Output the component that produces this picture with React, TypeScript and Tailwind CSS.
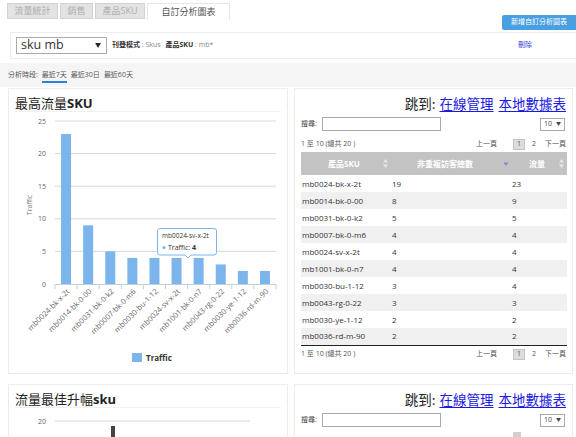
import React from 'react';

const rows: [string, string, string][] = [
  ['mb0024-bk-x-2t', '19', '23'],
  ['mb0014-bk-0-00', '8', '9'],
  ['mb0031-bk-0-k2', '5', '5'],
  ['mb0007-bk-0-m6', '4', '4'],
  ['mb0024-sv-x-2t', '4', '4'],
  ['mb1001-bk-0-n7', '4', '4'],
  ['mb0030-bu-1-12', '3', '4'],
  ['mb0043-rg-0-22', '3', '3'],
  ['mb0030-ye-1-12', '2', '2'],
  ['mb0036-rd-m-90', '2', '2'],
];

const bars = [23, 9, 5, 4, 4, 4, 4, 3, 2, 2];
const labels = [
  'mb0024-bk-x-2t',
  'mb0014-bk-0-00',
  'mb0031-bk-0-k2',
  'mb0007-bk-0-m6',
  'mb0030-bu-1-12',
  'mb0024-sv-x-2t',
  'mb1001-bk-0-n7',
  'mb0043-rg-0-22',
  'mb0030-ye-1-12',
  'mb0036-rd-m-90',
];

const OX = 9;
const OY = 112;

function Chart() {
  const y0 = 284 - OY;
  const unit = 6.52;
  const gx0 = 55 - OX;
  const gx1 = 276 - OX;
  const cw = (gx1 - gx0) / 10;
  const ticks = [0, 5, 10, 15, 20, 25];
  return (
    <svg width="278" height="258" className="block" style={{ fontFamily: "'Open Sans','DejaVu Sans',sans-serif" }}>
      {ticks.map((t) => {
        const y = y0 - t * unit;
        return (
          <g key={t}>
            {t > 0 && <line x1={gx0} x2={gx1} y1={y} y2={y} stroke="#d8d8d8" strokeWidth="1" />}
            <text x={37} y={y + 2.5} fontSize="7" fill="#666" textAnchor="end">
              {t}
            </text>
          </g>
        );
      })}
      <text x={23} y={205 - OY} fontSize="7" fill="#777" textAnchor="middle" transform={`rotate(-90 23 ${205 - OY})`}>
        Traffic
      </text>
      {bars.map((v, i) => {
        const cx = gx0 + cw * (i + 0.5);
        const h = v * unit;
        return <rect key={i} x={cx - 5} y={y0 - h} width="10" height={h} fill="#7cb5ec" />;
      })}
      <line x1={gx0} x2={gx1} y1={y0 + 0.5} y2={y0 + 0.5} stroke="#c0d0e0" strokeWidth="1" />
      {Array.from({ length: 11 }).map((_, k) => {
        const x = gx0 + cw * k;
        return <line key={k} x1={x} x2={x} y1={y0} y2={y0 + 5} stroke="#c0d0e0" strokeWidth="1" />;
      })}
      {labels.map((l, i) => {
        const cx = gx0 + cw * (i + 0.5) + 4;
        const y = y0 + 8;
        return (
          <text key={l} x={cx} y={y} fontSize="7.5" fill="#666" textAnchor="end" transform={`rotate(-45 ${cx} ${y})`}>
            {l}
          </text>
        );
      })}
      <rect x={132 - OX} y={353 - OY} width="10" height="9" fill="#7cb5ec" />
      <text x={146 - OX} y={361 - OY} fontSize="8" fontWeight="bold" fill="#333">
        Traffic
      </text>
      <g transform={`translate(${157 - OX} ${228 - OY})`}>
        <path
          d="M3 0.5 H57 Q59.5 0.5 59.5 3 V24.5 Q59.5 27 57 27 H34 L31 30 L28 27 H3 Q0.5 27 0.5 24.5 V3 Q0.5 0.5 3 0.5 Z"
          fill="rgba(255,255,255,0.9)"
          stroke="#7cb5ec"
          strokeWidth="1"
        />
        <text x="5" y="10" fontSize="6.5" fill="#333">
          mb0024-sv-x-2t
        </text>
        <circle cx="7" cy="19.5" r="1.6" fill="#7cb5ec" />
        <text x="11" y="22" fontSize="7" fill="#333">
          Traffic: <tspan fontWeight="bold">4</tspan>
        </text>
      </g>
    </svg>
  );
}

function Chart2() {
  return (
    <svg width="278" height="40" className="block" style={{ fontFamily: "'Open Sans','DejaVu Sans',sans-serif" }}>
      <line x1={55 - OX} x2={250 - OX} y1={13} y2={13} stroke="#d8d8d8" strokeWidth="1" />
      <text x={37} y={15.5} fontSize="7" fill="#666" textAnchor="end">
        20
      </text>
      <rect x={111 - OX} y={18} width="4" height="30" fill="#434348" />
    </svg>
  );
}

function SortIcon({ active }: { active?: boolean }) {
  if (active)
    return (
      <svg width="6" height="6" className="absolute right-[2px] top-[9px]">
        <path d="M0.5 1.5 L5.5 1.5 L3 5 Z" fill="#8585dc" />
      </svg>
    );
  return (
    <svg width="5" height="9" className="absolute right-[3px] top-[7px]">
      <path d="M2.5 0 L5 3.5 L0 3.5 Z M2.5 9 L5 5.5 L0 5.5 Z" fill="#e6e6e6" />
    </svg>
  );
}

function JumpTitle() {
  return (
    <div className="h-[16px] mt-[6px] pr-[6px] flex justify-end items-center text-[13.5px] leading-[16px] text-[#222] font-['Noto_Sans_CJK_TC',sans-serif]">
      <span>跳到:</span>
      <a className="ml-[4px] text-[#1a1ae0] underline underline-offset-2">在線管理</a>
      <a className="ml-[5px] text-[#1a1ae0] underline underline-offset-2">本地數據表</a>
    </div>
  );
}

function SearchRow() {
  return (
    <div className="mt-[6px] h-[14px] px-[6px] flex items-center">
      <span className="text-[7px] text-[#444]">搜尋:</span>
      <div className="ml-[5px] w-[119px] h-[14px] border border-[#aaa] bg-white" />
      <div className="ml-auto mr-[1px] w-[25px] h-[13px] border border-[#aaa] flex items-center justify-between px-[3px] text-[7px] text-[#444]">
        <span>10</span>
        <span className="text-[5px]">▼</span>
      </div>
    </div>
  );
}

function Pager() {
  return (
    <div className="h-[12px] flex items-center text-[7px] text-[#555]">
      <span>1 至 10 (總共 20 )</span>
      <div className="ml-auto flex items-center">
        <span>上一頁</span>
        <span className="ml-[16px] w-[12px] h-[11px] bg-[#dcdcdc] border border-[#c4c4c4] flex items-center justify-center">1</span>
        <span className="ml-[7px]">2</span>
        <span className="ml-[9px]">下一頁</span>
      </div>
    </div>
  );
}

export default function App() {
  return (
    <div className="w-[576px] h-[437px] overflow-hidden bg-white text-[#333] font-['Open_Sans','Noto_Sans_CJK_TC',sans-serif]">
      {/* header */}
      <div className="flex justify-between items-start h-[32px]">
        <div className="flex items-start gap-[2px] ml-[7px] mt-[3px] text-[9px]">
          <div className="w-[51px] h-[16px] bg-[#e3e3e3] border border-[#d2d2d2] text-[#adadad] flex items-center justify-center">流量統計</div>
          <div className="w-[33px] h-[16px] bg-[#e3e3e3] border border-[#d2d2d2] text-[#adadad] flex items-center justify-center">銷售</div>
          <div className="w-[50px] h-[16px] bg-[#e3e3e3] border border-[#d2d2d2] text-[#adadad] flex items-center justify-center">產品SKU</div>
          <div className="w-[83px] h-[17px] bg-white border border-b-0 border-[#e6e6e6] text-[#555] flex items-center justify-center">自訂分析圖表</div>
        </div>
        <div className="mt-[15px] w-[74px] h-[15px] bg-[#4a9fe2] rounded-l-[2px] text-white text-[7px] flex items-center justify-center">
          新增自訂分析圖表
        </div>
      </div>

      {/* filter row */}
      <div className="ml-[10px] h-[27px] border border-r-0 border-[#ececec] flex items-center">
        <div className="ml-[5px] w-[91px] h-[17px] border border-[#aaa] flex items-center justify-between pl-[4px] pr-[5px]">
          <span className="text-[12.5px] leading-none text-[#333]">sku mb</span>
          <span className="text-[6px] text-[#222]">▼</span>
        </div>
        <div className="ml-[5px] text-[7px] text-[#888]">
          <span className="font-bold text-[#333]">刊登模式</span> : Skus <span className="ml-[3px] font-bold text-[#333]">產品SKU</span> : mb*
        </div>
        <a className="ml-auto mr-[44px] text-[7px] text-[#3b3be0]">刪除</a>
      </div>

      {/* period row */}
      <div className="mt-[4px] h-[24px] bg-[#f5f5f5] flex items-center pl-[8px] text-[7px] text-[#555] gap-[4px]">
        <span>分析時段:</span>
        <span className="border-b-2 border-[#2d7fd8] pt-[3px] pb-[1px]">最近7天</span>
        <span>最近30日</span>
        <span>最近60天</span>
      </div>

      {/* panels row 1 */}
      <div className="flex mt-[1px]">
        <div className="ml-[8px] w-[280px] h-[286px] border border-[#ececec] bg-white">
          <div className="mx-[6px] pt-[5px] h-[23px] border-b border-[#f0f0f0] flex items-center text-[13px] leading-[16px] text-[#222]">
            <span className="font-['Noto_Sans_CJK_TC',sans-serif]">最高流量</span>
            <span className="font-bold font-['Open_Sans',sans-serif]">SKU</span>
          </div>
          <Chart />
        </div>

        <div className="ml-[6px] w-[279px] h-[286px] border border-[#ececec] bg-white">
          <JumpTitle />
          <SearchRow />
          <div className="px-[6px] mt-[7px]">
            <Pager />
            <table className="mt-[2px] w-[266px] table-fixed border-collapse border-b border-[#222]">
              <colgroup>
                <col className="w-[90px]" />
                <col className="w-[120px]" />
                <col className="w-[56px]" />
              </colgroup>
              <thead>
                <tr className="h-[23px] bg-[#c3c3c3] text-white text-[8px] font-bold">
                  <th className="relative text-center pr-[4px]">
                    產品SKU
                    <SortIcon />
                  </th>
                  <th className="relative text-center pr-[12px]">
                    非重複訪客總數
                    <SortIcon active />
                  </th>
                  <th className="relative text-center pr-[4px]">
                    流量
                    <SortIcon />
                  </th>
                </tr>
              </thead>
              <tbody>
                {rows.map((r, i) => (
                  <tr key={r[0]} className={`h-[17px] text-[8px] text-[#333] ${i % 2 === 1 ? 'bg-[#f0f0f0]' : 'bg-white'}`}>
                    <td className="pl-[1px]">{r[0]}</td>
                    <td className="pl-[1px]">{r[1]}</td>
                    <td className="pl-[1px]">{r[2]}</td>
                  </tr>
                ))}
              </tbody>
            </table>
            <div className="mt-[3px]">
              <Pager />
            </div>
          </div>
        </div>
      </div>

      {/* panels row 2 */}
      <div className="flex mt-[10px]">
        <div className="ml-[8px] w-[280px] h-[120px] border border-[#ececec] bg-white">
          <div className="mx-[6px] pt-[5px] h-[23px] border-b border-[#f0f0f0] flex items-center text-[13px] leading-[16px] text-[#222]">
            <span className="font-['Noto_Sans_CJK_TC',sans-serif]">流量最佳升幅</span>
            <span className="font-bold font-['Open_Sans',sans-serif]">sku</span>
          </div>
          <Chart2 />
        </div>
        <div className="ml-[6px] w-[279px] h-[120px] border border-[#ececec] bg-white">
          <JumpTitle />
          <SearchRow />
          <div className="ml-[218px] mt-[5px] w-[8px] h-[10px] bg-[#d0d0d0]" />
        </div>
      </div>
    </div>
  );
}
